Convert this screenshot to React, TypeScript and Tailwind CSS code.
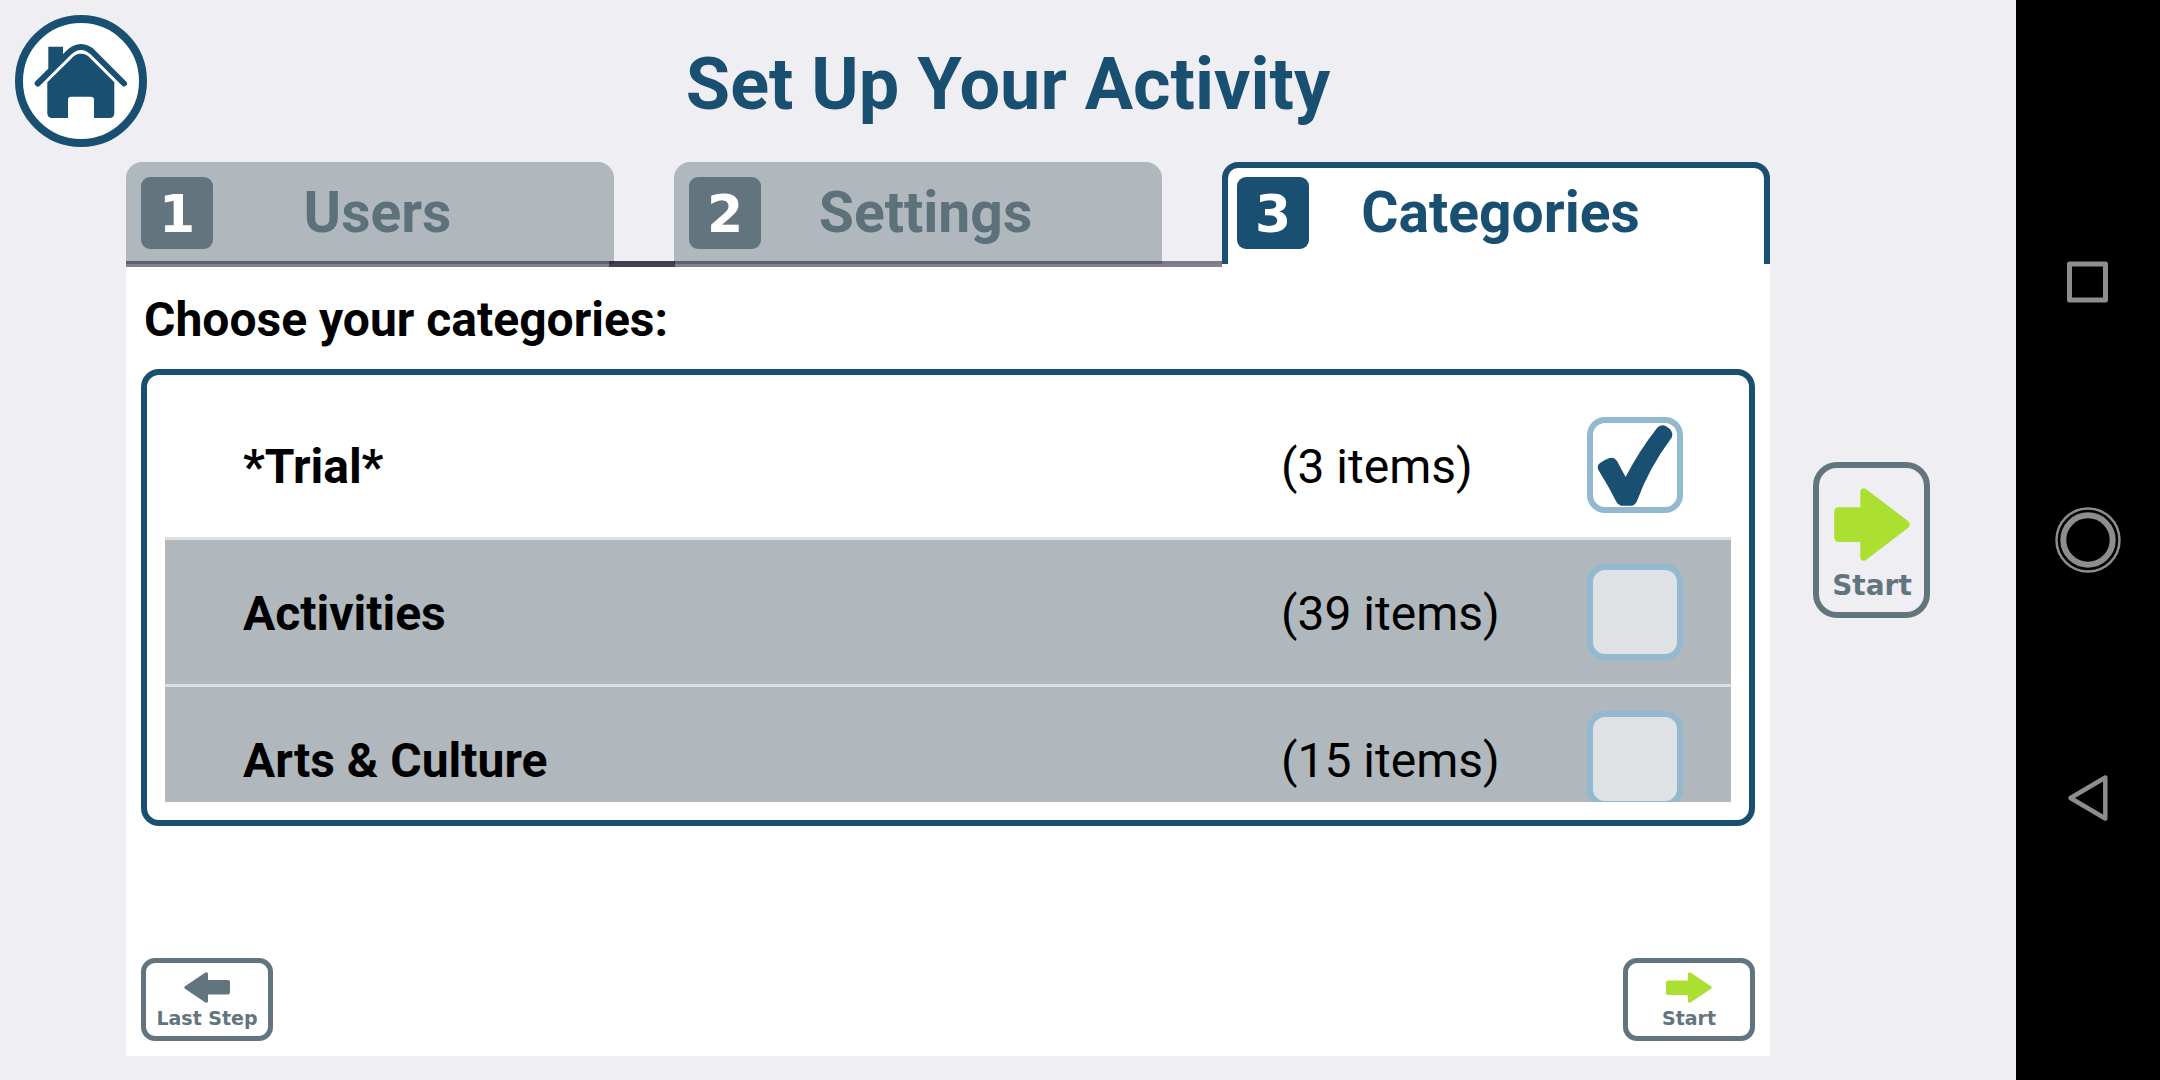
import { useState } from "react";

const steps = [
  { number: 1, label: "Users" },
  { number: 2, label: "Settings" },
  { number: 3, label: "Categories" },
];

const categories = [
  { name: "*Trial*", items: 3 },
  { name: "Activities", items: 39 },
  { name: "Arts & Culture", items: 15 },
];

function HomeIcon() {
  return (
    <svg viewBox="0 0 132 132" className="size-full" aria-hidden="true">
      <circle cx="66" cy="66" r="62" fill="#fff" stroke="#194f70" strokeWidth="8" />
      <path d="M33.3 31.7H48V44L33.3 58.5Z" fill="#194f70" />
      <path
        d="M22.7 68.5 L54 37.5 C61 30 71 30 78 37.5 L109 68.5"
        fill="none"
        stroke="#194f70"
        strokeWidth="6"
        strokeLinecap="round"
      />
      <path
        d="M32.3 67.3 L56 44 C61 37 71 37 76 44 L99.3 67.3 V98 Q99.3 103 94.3 103 H79 V84.7 Q79 81.7 76 81.7 H56 Q53 81.7 53 84.7 V103 H37.3 Q32.3 103 32.3 98Z"
        fill="#194f70"
      />
    </svg>
  );
}

function SmallArrow({ className }: { className: string }) {
  return (
    <svg viewBox="0 0 46 31" className={className} fill="currentColor" aria-hidden="true">
      <path d="M2 8.5H22V1.8Q22.4 -0.4 24.6 0.6L45 14.3Q46.4 15.5 45 16.7L24.6 30.4Q22.4 31.4 22 29.2V23H2Q0 23 0 21V10.5Q0 8.5 2 8.5Z" />
    </svg>
  );
}

function LargeArrow() {
  return (
    <svg viewBox="0 0 76 73" className="h-[73px] w-[76px] text-[#abe032]" fill="currentColor" aria-hidden="true">
      <path d="M5 19.2H26.3V3Q27.5 -1.2 31.6 0.8L74 33Q77.5 36.5 74 40L31.6 72.2Q27.5 74.2 26.3 70V54H5Q0.2 54 0.2 49.2V24Q0.2 19.2 5 19.2Z" />
    </svg>
  );
}

function CheckMark() {
  return (
    <svg viewBox="0 0 96 96" className="pointer-events-none absolute inset-0 size-full" aria-hidden="true">
      <path
        d="M70 11 Q74 6.500 79.500 9.500 Q87 14 85 20 Q62 51 50 84 Q48 88.700 44 88.700 H34 Q31 88 29.500 85 Q22 70 12 54 Q9 49 13 46 Q17 43 22.500 41 Q27 39.500 30 44 L38.600 60 Q52 34 70 11Z"
        fill="#194f70"
      />
    </svg>
  );
}

export default function App() {
  const [step, setStep] = useState(3);
  const [selected, setSelected] = useState(["*Trial*"]);

  const toggle = (name: string) =>
    setSelected((now) => (now.includes(name) ? now.filter((n) => n !== name) : [...now, name]));

  return (
    <div className="flex min-h-screen bg-[#efeef3] font-[Roboto,sans-serif] text-black">
      <div className="w-[126px] shrink-0 pt-[15px] pl-[15px]">
        <button type="button" aria-label="Home" className="relative block size-[132px]">
          <HomeIcon />
        </button>
      </div>

      <div className="flex min-w-0 flex-1 flex-col pb-6">
        <h1 className="pt-[43px] pb-[35px] pl-[120px] text-center text-[72px] leading-[84px] font-bold whitespace-nowrap text-[#194f70]">
          Set Up Your Activity
        </h1>

        <div role="tablist" className="relative grid grid-cols-3">
          {steps.map(({ number, label }) => {
            const active = number === step;
            return (
              <button
                key={number}
                type="button"
                role="tab"
                aria-selected={active}
                onClick={() => setStep(number)}
                className={
                  active
                    ? "grid h-[102px] rounded-t-[16px] border-x-6 border-t-6 border-[#194f70] bg-white pt-[9px] pl-[9px] text-[#194f70]"
                    : "mr-[60px] grid h-[102px] rounded-t-[16px] bg-[#b0b8be] pt-[15px] pl-[15px] text-[#5d717b]"
                }
              >
                <span
                  className={
                    active
                      ? "col-start-1 row-start-1 size-[72px] rounded-[9px] bg-[#194f70] text-center font-['DejaVu_Sans',sans-serif] text-[52px] leading-[74px] font-bold text-white"
                      : "col-start-1 row-start-1 size-[72px] rounded-[9px] bg-[#62757f] text-center font-['DejaVu_Sans',sans-serif] text-[52px] leading-[74px] font-bold text-white"
                  }
                >
                  {number}
                </span>
                <span className="col-start-1 row-start-1 text-center text-[57px] leading-[72px] font-bold">
                  {label}
                </span>
              </button>
            );
          })}
          <div className="pointer-events-none absolute inset-x-0 top-[99px] grid grid-cols-3">
            <div className="-mr-px h-[6px] bg-[#09011f]/50" />
            <div className="-ml-[65px] h-[6px] bg-[#09011f]/50" />
          </div>
        </div>

        <main className="flex flex-1 flex-col bg-white px-[15px] pb-[15px]">
          <h2 className="px-[3px] pt-7 pb-[21px] text-[48px] leading-[56px] font-bold">Choose your categories:</h2>

          <div className="rounded-[18px] border-6 border-[#194f70] p-[18px]">
            <ul className="h-[409px] divide-y-3 divide-[#dfdfe1] overflow-y-auto [scrollbar-width:none]">
              {categories.map(({ name, items }) => {
                const checked = selected.includes(name);
                return (
                  <li key={name}>
                    <label
                      className={
                        checked
                          ? "flex h-[144px] items-center bg-white pr-12 pl-[78px] text-[48px] leading-[56px]"
                          : "flex h-[144px] items-center bg-[#b0b8be] pr-12 pl-[78px] text-[48px] leading-[56px]"
                      }
                    >
                      <span className="flex-1 pt-1 font-bold">{name}</span>
                      <span className="w-[306px] pt-1">({items} items)</span>
                      <span className="relative size-24">
                        <input
                          type="checkbox"
                          checked={checked}
                          onChange={() => toggle(name)}
                          className="block size-24 appearance-none rounded-[18px] border-6 border-[#93b9d0] bg-[#dee2e4] checked:bg-white"
                        />
                        {checked && <CheckMark />}
                      </span>
                    </label>
                  </li>
                );
              })}
            </ul>
          </div>

          <div className="mt-auto flex justify-between font-['DejaVu_Sans',sans-serif] text-[19px] leading-6 font-bold text-[#62757f]">
            <button
              type="button"
              className="flex h-[83px] w-[132px] flex-col items-center rounded-[14px] border-5 border-current pt-[9px] whitespace-nowrap"
            >
              <SmallArrow className="mb-[3px] h-[31px] w-[46px] rotate-180" />
              Last Step
            </button>
            <button
              type="button"
              className="flex h-[83px] w-[132px] flex-col items-center rounded-[14px] border-5 border-current pt-[9px] whitespace-nowrap"
            >
              <SmallArrow className="mb-[3px] h-[31px] w-[46px] text-[#abe032]" />
              Start
            </button>
          </div>
        </main>
      </div>

      <aside className="flex w-[246px] shrink-0 items-center pl-[43px]">
        <button
          type="button"
          className="flex h-[156px] w-[117px] flex-col items-center rounded-[24px] border-6 border-[#62757f] pt-5 pl-px font-['DejaVu_Sans',sans-serif] text-[28px] leading-8 font-bold text-[#62757f]"
        >
          <LargeArrow />
          <span className="pt-[9px]">Start</span>
        </button>
      </aside>

      <nav className="flex w-36 shrink-0 flex-col items-center justify-center gap-48 bg-black text-[#8d8d8d]">
        <button type="button" aria-label="Recent apps" className="size-[66px]">
          <svg viewBox="0 0 66 66" fill="none" stroke="currentColor" strokeWidth="5" strokeLinejoin="round" aria-hidden="true">
            <rect x="14.500" y="15" width="36" height="36" />
          </svg>
        </button>
        <button type="button" aria-label="Home screen" className="size-[66px]">
          <svg viewBox="0 0 66 66" fill="none" stroke="currentColor" aria-hidden="true">
            <circle cx="33" cy="33" r="31.500" strokeWidth="2.500" />
            <circle cx="33" cy="33" r="24.700" strokeWidth="6" />
          </svg>
        </button>
        <button type="button" aria-label="Back" className="size-[66px]">
          <svg
            viewBox="0 0 66 66"
            fill="none"
            stroke="currentColor"
            strokeWidth="4.500"
            strokeLinejoin="round"
            aria-hidden="true"
          >
            <path d="M15.500 33 L50.300 12.500 V53.500Z" />
          </svg>
        </button>
      </nav>
    </div>
  );
}
